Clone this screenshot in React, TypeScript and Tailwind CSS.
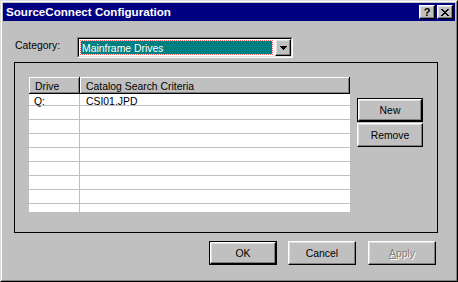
import React from "react";

const raised =
  "bg-[#c0c0c0] border border-t-white border-l-white border-r-black border-b-black shadow-[inset_-1px_-1px_#808080,inset_1px_1px_#dfdfdf]";

function CloseGlyph() {
  const rows: number[][] = [
    [0, 1, 6, 7],
    [1, 2, 5, 6],
    [2, 3, 4, 5],
    [3, 4],
    [2, 3, 4, 5],
    [1, 2, 5, 6],
    [0, 1, 6, 7],
  ];
  return (
    <svg width="8" height="7" viewBox="0 0 8 7" shapeRendering="crispEdges">
      {rows.map((r, y) =>
        r.map((x) => <rect key={`${x}-${y}`} x={x} y={y} width="1" height="1" fill="#000" />)
      )}
    </svg>
  );
}

function ArrowDown() {
  return (
    <svg width="7" height="4" viewBox="0 0 7 4" shapeRendering="crispEdges">
      <rect x="0" y="0" width="7" height="1" fill="#000" />
      <rect x="1" y="1" width="5" height="1" fill="#000" />
      <rect x="2" y="2" width="3" height="1" fill="#000" />
      <rect x="3" y="3" width="1" height="1" fill="#000" />
    </svg>
  );
}

function Button({
  label,
  w,
  h,
  isDefault,
  disabled,
  className = "",
}: {
  label: React.ReactNode;
  w: string;
  h: string;
  isDefault?: boolean;
  disabled?: boolean;
  className?: string;
}) {
  const text = disabled
    ? "text-[#808080] [text-shadow:1px_1px_0_#ffffff]"
    : "text-black";
  if (isDefault) {
    return (
      <div className={`${w} ${h} border border-black ${className}`}>
        <div className={`w-full h-full ${raised} flex items-center justify-center leading-[13px] ${text}`}>
          {label}
        </div>
      </div>
    );
  }
  return (
    <div className={`${w} ${h} ${raised} flex items-center justify-center leading-[13px] ${text} ${className}`}>
      {label}
    </div>
  );
}

export default function App() {
  const rows = [
    ["Q:", "CSI01.JPD"],
    ["", ""],
    ["", ""],
    ["", ""],
    ["", ""],
    ["", ""],
    ["", ""],
    ["", ""],
    ["", ""],
  ];
  return (
    <div className="w-[458px] h-[282px] border border-t-[#dfdfdf] border-l-[#dfdfdf] border-r-black border-b-black bg-[#c0c0c0] font-['Liberation_Sans',Arial,sans-serif] text-[10.4px] text-black">
      <div className="h-full border border-t-white border-l-white border-r-[#808080] border-b-[#808080] p-px flex flex-col">
        {/* Title bar */}
        <div className="h-[18px] bg-[#000080] flex items-center pl-[3px] pr-[2px]">
          <div className="flex-1 text-white font-bold text-[11.6px] leading-[18px] whitespace-nowrap">
            SourceConnect Configuration
          </div>
          <div className={`w-[16px] h-[14px] ${raised} flex items-center justify-center`}>
            <span className="font-bold text-[11px] leading-[11px] text-black pt-[1px]">?</span>
          </div>
          <div className={`w-[16px] h-[14px] ml-[2px] ${raised} flex items-center justify-center`}>
            <CloseGlyph />
          </div>
        </div>

        {/* Body */}
        <div className="flex-1 flex flex-col">
          {/* Category row */}
          <div className="flex items-start mt-[16px] pl-[12px]">
            <div className="w-[62px] mt-[2px] leading-[13px]">Category:</div>
            <div className="w-[216px] h-[21px] border border-t-[#808080] border-l-[#808080] border-r-white border-b-white">
              <div className="w-full h-full border border-t-black border-l-black border-r-[#dfdfdf] border-b-[#dfdfdf] bg-white flex">
                <div className="flex-1 m-[1px] mr-[2px] border border-dotted border-[#ff6060] bg-[#008080] bg-clip-padding text-white leading-[13px] pt-[1px] pl-[1px] whitespace-nowrap">
                  Mainframe Drives
                </div>
                <div className={`w-[16px] h-full ${raised} flex items-center justify-center`}>
                  <ArrowDown />
                </div>
              </div>
            </div>
          </div>

          {/* Frame */}
          <div className="mt-[4px] ml-[11px] w-[424px] h-[171px] border border-black flex items-start pl-[14px] pt-[14px]">
            {/* List view */}
            <div className="w-[321px] h-[135px] bg-white flex flex-col overflow-hidden">
              <div className="h-[17px] flex bg-[#c0c0c0]">
                <div className="w-[51px] h-full border-r border-b border-black shadow-[inset_1px_1px_#ffffff,inset_-1px_-1px_#808080] pl-[6px] pt-[2px] leading-[15px]">
                  Drive
                </div>
                <div className="w-[270px] h-full border-r border-b border-black shadow-[inset_1px_1px_#ffffff,inset_-1px_-1px_#808080] pl-[6px] pt-[2px] leading-[15px] whitespace-nowrap">
                  Catalog Search Criteria
                </div>
              </div>
              <div className="flex-1 overflow-hidden">
                <div className="mt-[-2px]">
                  {rows.map((r, i) => (
                    <div key={i} className="h-[14px] border-b border-[#c0c0c0] flex">
                      <div className="w-[51px] h-full border-r border-[#c0c0c0] pl-[5px] pt-[3px] leading-[13px]">
                        {r[0]}
                      </div>
                      <div className="flex-1 h-full pl-[6px] pt-[3px] leading-[13px]">{r[1]}</div>
                    </div>
                  ))}
                </div>
              </div>
            </div>

            {/* Side buttons */}
            <div className="ml-[7px] mt-[21px] flex flex-col gap-[1px]">
              <Button label="New" w="w-[66px]" h="h-[24px]" isDefault />
              <Button label="Remove" w="w-[66px]" h="h-[24px]" />
            </div>
          </div>

          {/* Bottom buttons */}
          <div className="mt-[8px] ml-[206px] flex">
            <Button label="OK" w="w-[68px]" h="h-[24px]" isDefault />
            <Button label="Cancel" w="w-[68px]" h="h-[24px]" className="ml-[11px]" />
            <Button
              label={
                <span>
                  <span className="underline">A</span>pply
                </span>
              }
              w="w-[68px]"
              h="h-[24px]"
              disabled
              className="ml-[12px]"
            />
          </div>
        </div>
      </div>
    </div>
  );
}
